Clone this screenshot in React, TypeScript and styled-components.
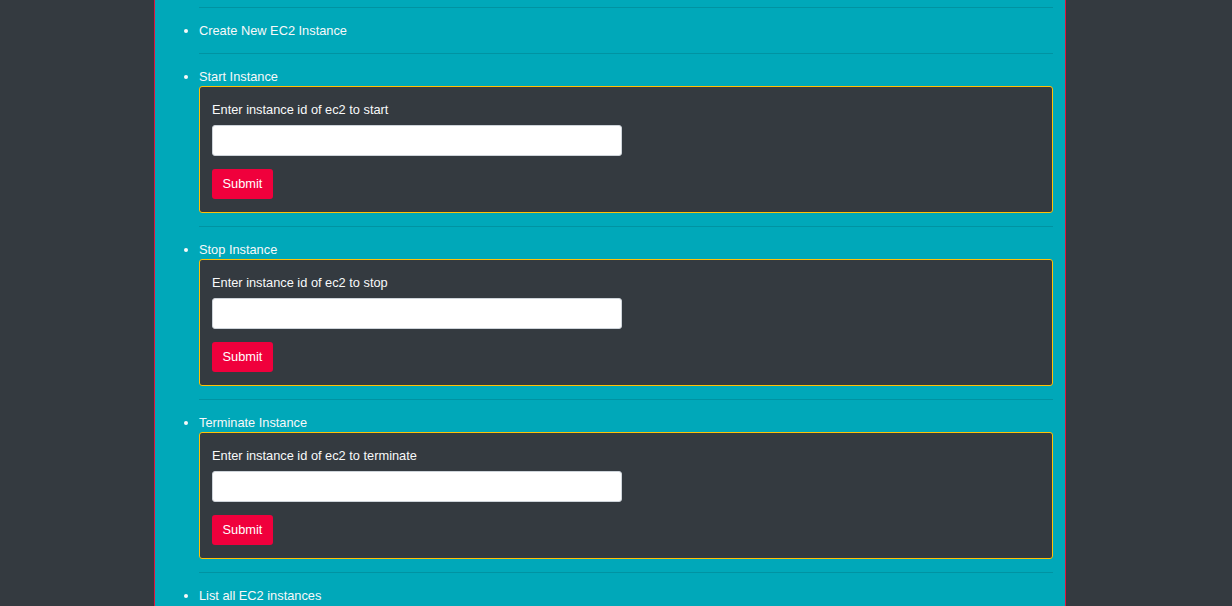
import React from "react";
import styled, { createGlobalStyle } from "styled-components";

const Global = createGlobalStyle`
  html, body {
    margin: 0;
    padding: 0;
    background: #343a40;
    height: 606px;
    overflow: hidden;
    font-family: "Liberation Sans", Arial, sans-serif;
  }
`;

const Page = styled.div`
  display: flex;
  justify-content: center;
  min-height: 606px;
`;

const Column = styled.main`
  margin-left: -12px;
  min-height: 606px;
  background: #00a8b9;
  border-left: 1px solid #dc143c;
  border-right: 1px solid #dc143c;
  padding: 7px 12px 0 44px;
  box-sizing: content-box;
  width: 854px;
`;

const List = styled.ul`
  margin: 0;
  padding: 0;
  color: #f8f9fa;
  font-size: 12.8px;
  line-height: 19px;
  list-style: disc;
`;

const Divider = styled.hr`
  border: 0;
  border-top: 1px solid rgba(0, 0, 0, 0.12);
  margin: 0;
  height: 0;
`;

const Item = styled.li`
  padding: 13px 0 13px;
`;

const FormBox = styled.form`
  background: #343a40;
  border: 1px solid #ffc107;
  border-radius: 3px;
  padding: 13px 12px 13px;
  display: flex;
  flex-direction: column;
  align-items: flex-start;
`;

const Label = styled.label`
  color: #f8f9fa;
  font-size: 12.8px;
  line-height: 20px;
  margin-bottom: 5px;
`;

const Input = styled.input`
  width: 410px;
  height: 31px;
  box-sizing: border-box;
  background: #fff;
  border: 1px solid #ced4da;
  border-radius: 3px;
  margin: 0 0 13px;
  padding: 4px 8px;
  font-size: 13px;
  font-family: inherit;
`;

const SubmitButton = styled.button`
  width: 61px;
  height: 30px;
  background: #f0003c;
  color: #fff;
  border: 0;
  border-radius: 3px;
  font-family: inherit;
  font-size: 12.8px;
  line-height: 20px;
  padding: 0 0 1px;
  cursor: pointer;
`;

type Entry = { title: string; action?: string };

const entries: Entry[] = [
  { title: "Create New EC2 Instance" },
  { title: "Start Instance", action: "start" },
  { title: "Stop Instance", action: "stop" },
  { title: "Terminate Instance", action: "terminate" },
  { title: "List all EC2 instances" },
];

export default function App() {
  return (
    <>
      <Global />
      <Page>
        <Column>
          <List>
            {entries.map((e) => (
              <React.Fragment key={e.title}>
                <Divider />
                <Item>
                  {e.title}
                  {e.action && (
                    <FormBox onSubmit={(ev) => ev.preventDefault()}>
                      <Label>Enter instance id of ec2 to {e.action}</Label>
                      <Input type="text" />
                      <SubmitButton type="submit">Submit</SubmitButton>
                    </FormBox>
                  )}
                </Item>
              </React.Fragment>
            ))}
          </List>
        </Column>
      </Page>
    </>
  );
}
